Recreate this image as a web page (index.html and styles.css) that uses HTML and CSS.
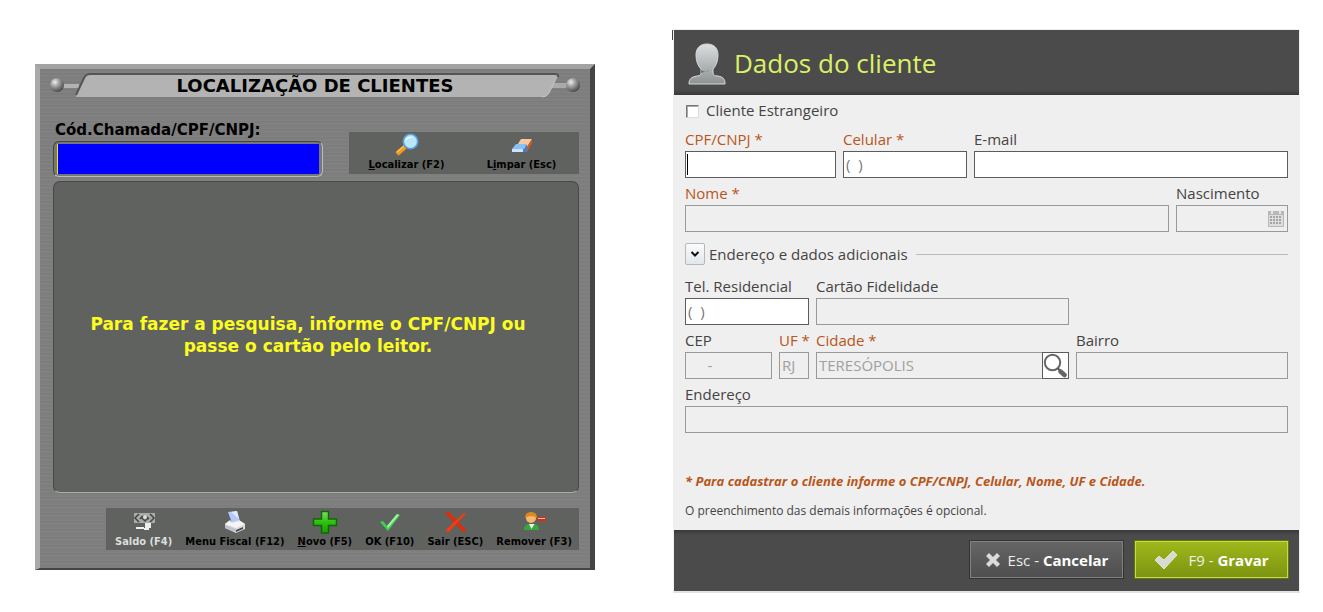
FILE: index.html
```html
<!DOCTYPE html>
<html lang="pt-BR">
<head>
<meta charset="utf-8">
<title>Dados do cliente</title>
<link rel="stylesheet" href="styles.css">
</head>
<body>
<main class="screens">
  <section class="search">
    <header class="titlebar">
      <svg class="cap" width="46" height="26" viewBox="0 0 46 26" aria-hidden="true">
        <defs><radialGradient id="knob" cx=".35" cy=".3" r=".75"><stop offset="0" stop-color="#eee"/><stop offset=".35" stop-color="#aaa"/><stop offset="1" stop-color="#444"/></radialGradient></defs>
        <path d="M12 11h18v4H12z" fill="#b3b3b3"/>
        <path d="M46 1H41Q37 1 35 5L27 22Q26 24 29 24H46z" fill="#b3b3b3"/>
        <path d="M46 1H41Q37 1 35 5L27 22" fill="none" stroke="#555" stroke-width="2"/>
        <circle cx="8" cy="12" r="7" fill="url(#knob)"/>
      </svg>
      <h1 class="search-title">LOCALIZAÇÃO DE CLIENTES</h1>
      <svg class="cap" width="46" height="26" viewBox="0 0 46 26" aria-hidden="true">
        <path d="M16 10h18v5H16z" fill="#aaa"/>
        <path d="M0 1H23L14 20Q12 24 7 24H0z" fill="#b3b3b3"/>
        <path d="M0 1H20Q24 1 23 4" fill="none" stroke="#555" stroke-width="2"/>
        <path d="M22 4L14 20Q12 24 7 24" fill="none" stroke="#c6c6c6"/>
        <circle cx="38" cy="12" r="7" fill="url(#knob)"/>
      </svg>
    </header>
    <div class="query">
      <div class="query-field">
        <label class="query-label" for="codigo">Cód.Chamada/CPF/CNPJ:</label>
        <div class="query-frame"><input class="query-input" id="codigo" type="text"></div>
      </div>
      <div class="query-actions">
        <button class="tool" type="button">
          <svg width="26" height="24" viewBox="0 0 26 24" aria-hidden="true"><path d="M3 21l8-7" stroke="#f09a1e" stroke-width="4.5"/><path d="M3 19l7-6" stroke="#ffc55c" stroke-width="1.5"/><circle cx="16.500" cy="8.500" r="7.200" fill="#b9e6fb" stroke="#5b9fd8" stroke-width="1.600"/><path d="M11 8q2-5 8-4-5 1-8 4z" fill="#fff"/></svg>
          <span><u>L</u>ocalizar (F2)</span>
        </button>
        <button class="tool" type="button">
          <svg width="26" height="24" viewBox="0 0 26 24" aria-hidden="true"><path d="M12 6h11l-5 8H7z" fill="#f6c9a4"/><path d="M23 6v4l-5 9v-5z" fill="#d9571c"/><path d="M7 12h11v7H3v-3z" fill="#3f7fce"/><path d="M7 11h11l-3 5H3z" fill="#8bc0f5"/><path d="M3 16h11v3H3z" fill="#c9e4fb"/></svg>
          <span>L<u>i</u>mpar (Esc)</span>
        </button>
      </div>
    </div>
    <div class="result">
      <p class="result-text">Para fazer a pesquisa, informe o CPF/CNPJ ou<br>passe o cartão pelo leitor.</p>
    </div>
    <div class="toolbar">
      <button class="tool tool-off" type="button" disabled>
        <svg width="26" height="24" viewBox="0 0 26 24" aria-hidden="true"><path d="M3 3h21v10H3z" fill="#aaa"/><path d="M8 4l-4 4 4 4M19 4l4 4-4 4" fill="none" stroke="#444" stroke-width="1.500"/><path d="M9 9q4-6 9 0M11 8l3 3 3-3" fill="none" stroke="#444" stroke-width="1.500"/><circle cx="14" cy="7" r="2" fill="#ddd"/><path d="M14 13h6v5h-6zM5 17h8v2H5zM13 18h5v2h-5z" fill="#eee"/></svg>
        <span>Saldo (F4)</span>
      </button>
      <button class="tool" type="button">
        <svg width="26" height="24" viewBox="0 0 26 24" aria-hidden="true"><path d="M6 2l9-1 3 10-8 2z" fill="#b5c8fb"/><path d="M9 2l6-1 2 8z" fill="#e2eaff"/><path d="M3 14l5-4 2 2 7-2 6 4v5l-9 4-11-5z" fill="#d9dbe0"/><path d="M3 14l11 4 9-4-5-3-8 2-3-2z" fill="#f5f5f7"/><path d="M14 20l7-3v2l-7 3z" fill="#4a4a4a"/><path d="M3 15l11 4v3L3 18z" fill="#bfc2c8"/></svg>
        <span>Menu Fiscal (F12)</span>
      </button>
      <button class="tool" type="button">
        <svg width="26" height="24" viewBox="0 0 26 24" aria-hidden="true"><defs><linearGradient id="plus" x2="0" y2="1"><stop offset="0" stop-color="#7ae05e"/><stop offset=".5" stop-color="#2fc010"/><stop offset="1" stop-color="#16a000"/></linearGradient></defs><path d="M9.500 1.500h7v7.500h8v6.500h-8v7.500h-7v-7.500h-8V9h8z" fill="url(#plus)" stroke="#12660a" stroke-width="1.500"/></svg>
        <span><u>N</u>ovo (F5)</span>
      </button>
      <button class="tool" type="button">
        <svg width="26" height="24" viewBox="0 0 26 24" aria-hidden="true"><path d="M3 12l3-1 4 5L20 4l3 1-12 16z" fill="#3fd24e"/><path d="M10 16L20 4l2 1-11 13z" fill="#a0f2a4"/></svg>
        <span>OK (F10)</span>
      </button>
      <button class="tool" type="button">
        <svg width="26" height="24" viewBox="0 0 26 24" aria-hidden="true"><path d="M3 3l4-1 17 18-1 2h-2z" fill="#e02c08"/><path d="M22 3l2 1-9 9-8 9-4-1 9-9z" fill="#f23c12"/></svg>
        <span>Sair (ESC)</span>
      </button>
      <button class="tool" type="button">
        <svg width="26" height="24" viewBox="0 0 26 24" aria-hidden="true"><path d="M3 20q0-6 5-6h5q5 0 5 6z" fill="#3aa73c"/><path d="M8 14l2.500 5 3-5z" fill="#e6f5e6"/><circle cx="10" cy="8" r="5" fill="#f5b871"/><path d="M4 8q0-6 6-6t6 6q-6-4-12 0z" fill="#dc8a1d"/><path d="M16 7h9v4h-9z" fill="#d33012"/><path d="M17 8h7v1h-7z" fill="#ffb9a5"/></svg>
        <span>Remover (F3)</span>
      </button>
    </div>
  </section>

  <form class="client">
    <header class="client-head">
      <svg width="38" height="42" viewBox="0 0 38 42" aria-hidden="true"><defs><linearGradient id="bust" x2="0" y2="1"><stop offset="0" stop-color="#dcdee0"/><stop offset="1" stop-color="#8d9293"/></linearGradient></defs><path d="M19 1c7 0 11 4 11 11 0 6-2 11-5 14v4q0 3 5 3 7 1 7 7v1H1v-1q0-6 8-7 4 0 4-2v-5c-3-3-5-8-5-14C8 5 12 1 19 1z" fill="url(#bust)" stroke="#d5d8d9"/><path d="M13 27q5 3 9 0l-9 3z" fill="#6d7172"/></svg>
      <h2 class="client-title">Dados do cliente</h2>
    </header>
    <div class="client-body">
      <label class="check"><input class="check-box" type="checkbox"><span>Cliente Estrangeiro</span></label>
      <div class="row row-contact">
        <div class="field"><label class="label required" for="cpf">CPF/CNPJ *</label><input class="input caret" id="cpf" type="text"></div>
        <div class="field"><label class="label required" for="cel">Celular *</label><input class="input" id="cel" type="text" value="(  )"></div>
        <div class="field"><label class="label" for="email">E-mail</label><input class="input" id="email" type="text"></div>
      </div>
      <div class="row row-name">
        <div class="field"><label class="label required" for="nome">Nome *</label><input class="input" id="nome" type="text" disabled></div>
        <div class="field"><label class="label" for="nasc">Nascimento</label>
          <div class="date"><input class="date-input" id="nasc" type="text" disabled>
          <svg width="16" height="17" viewBox="0 0 16 17" aria-hidden="true"><path d="M0 1h16v16H0z" fill="#b8b8b8"/><path d="M3 0h2v4H3zM11 0h2v4h-2z" fill="#e6e6e6"/><path d="M1 5h14v11H1z" fill="#dedede"/><path d="M2 7h12M2 10h12M2 13h12" stroke="#a5a5a5" stroke-width="2" stroke-dasharray="2 1"/></svg></div>
        </div>
      </div>
      <div class="section"><button class="toggle" type="button" aria-label="Recolher"><svg width="10" height="8" viewBox="0 0 10 8" aria-hidden="true"><path d="M1.500 2L5 5.500 8.500 2" fill="none" stroke="#111" stroke-width="2"/></svg></button><span>Endereço e dados adicionais</span><span class="rule"></span></div>
      <div class="row row-phone">
        <div class="field"><label class="label" for="tel">Tel. Residencial</label><input class="input" id="tel" type="text" value="(  )"></div>
        <div class="field"><label class="label" for="cartao">Cartão Fidelidade</label><input class="input" id="cartao" type="text" disabled></div>
      </div>
      <div class="row row-city">
        <div class="field"><label class="label" for="cep">CEP</label><input class="input" id="cep" type="text" value="     -" disabled></div>
        <div class="field"><label class="label required" for="uf">UF *</label><input class="input" id="uf" type="text" value="RJ" disabled></div>
        <div class="field"><label class="label required" for="cidade">Cidade *</label>
          <div class="lookup"><input class="input" id="cidade" type="text" value="TERESÓPOLIS" disabled><button class="lookup-button" type="button" aria-label="Buscar cidade"><svg width="25" height="25" viewBox="0 0 25 25" aria-hidden="true"><circle cx="9.500" cy="9.500" r="7.700" fill="none" stroke="#666" stroke-width="2"/><path d="M14.500 15l4 4" stroke="#555" stroke-width="2"/><path d="M17.500 18.500l4 3.500" stroke="#666" stroke-width="4.500" stroke-linecap="round"/></svg></button></div>
        </div>
        <div class="field"><label class="label" for="bairro">Bairro</label><input class="input" id="bairro" type="text" disabled></div>
      </div>
      <div class="field"><label class="label" for="end">Endereço</label><input class="input" id="end" type="text" disabled></div>
      <div class="notes">
        <p class="note note-required">* Para cadastrar o cliente informe o CPF/CNPJ, Celular, Nome, UF e Cidade.</p>
        <p class="note">O preenchimento das demais informações é opcional.</p>
      </div>
    </div>
    <footer class="client-foot">
      <button class="action" type="button"><svg width="16" height="16" viewBox="0 0 16 16" aria-hidden="true"><path d="M4 1l4 4 4-4 3 3-4 4 4 4-3 3-4-4-4 4-3-3 4-4-4-4z" fill="#d9dcde"/></svg><span>Esc - <b>Cancelar</b></span></button>
      <button class="action action-save" type="submit"><svg width="24" height="20" viewBox="0 0 24 20" aria-hidden="true"><path d="M1 10l4-4 5 4 9-9 4 4L10 19z" fill="#d6dbd2" stroke="#eef1e4" stroke-width=".8"/></svg><span>F9 - <b>Gravar</b></span></button>
    </footer>
  </form>
</main>
</body>
</html>
```
FILE: styles.css
```css
* { box-sizing: border-box; }
body { margin: 0; background: #fff; }
h1, h2, p { margin: 0; }
button, input { font: inherit; }
svg { flex: none; display: block; }

.screens {
  display: grid;
  grid-template-columns: 560fr 627fr;
  gap: 78px;
  align-items: start;
  padding: 29px 23px 18px 35px;
}

/* Customer search window */
.search {
  margin-top: 35px;
  padding: 4px 11px 18px 13px;
  border: solid;
  border-width: 5px 5px 2px 5px;
  border-color: #a3a3a3 #444 #444 #aaa;
  background: repeating-linear-gradient(#7b7b7b 0 1px, #7f7f7f 1px 3px, #828282 3px 4px);
  font-family: "DejaVu Sans Condensed", "DejaVu Sans", sans-serif;
  font-weight: bold;
  color: #000;
}
.titlebar { display: flex; margin: 0 -2px 0 -4px; }
.search-title {
  flex: 1;
  height: 24px;
  border-top: 2px solid #555;
  background: #b3b3b3;
  font: bold 18px/22px "DejaVu Sans", sans-serif;
  text-align: center;
  white-space: nowrap;
}
.query { display: flex; justify-content: space-between; align-items: flex-end; margin-top: 20px; }
.query-label { display: block; margin-left: 2px; font: bold 15px/22px "DejaVu Sans", sans-serif; }
.query-frame {
  width: 270px;
  padding: 2px 3px;
  border: 1px solid;
  border-color: #444 #bbb #bbb #444;
  border-radius: 6px;
  background: #777;
}
.query-input {
  display: block;
  width: 100%;
  height: 30px;
  border: 0;
  border-left: 1px solid #e8e800;
  background: #00f;
  color: #ff0;
}
.query-actions {
  display: grid;
  grid-template-columns: 1fr 1fr;
  width: 230px;
  height: 42px;
  margin-bottom: 3px;
  background: #60625f;
}
.tool {
  display: flex;
  flex-direction: column;
  align-items: center;
  gap: 1px;
  padding: 1px 0 0;
  border: 0;
  background: none;
  color: #000;
  font-size: 11px;
  line-height: 14px;
  white-space: nowrap;
}
.tool-off { color: #ddd; }
.result {
  display: grid;
  place-items: center;
  height: 312px;
  margin-top: 4px;
  border: 1px solid;
  border-color: #484848 #484848 #aaa #484848;
  border-radius: 7px;
  background: #60625f;
}
.result-text {
  padding: 0 16px 4px 0;
  color: #fcfc20;
  font: bold 17px/22px "DejaVu Sans", sans-serif;
  text-align: center;
}
.toolbar {
  display: flex;
  justify-content: space-between;
  height: 42px;
  margin: 15px 0 0 53px;
  padding: 1px 7px 0 9px;
  background: #60625f;
}

/* Customer data form */
.client {
  position: relative;
  border: 1px solid #efefef;
  border-bottom: 2px solid #e2e2e2;
  background: #efefef;
  color: #444;
  font-family: "Open Sans", "Noto Sans", sans-serif;
  font-size: 15px;
}
.client::before {
  content: "";
  position: absolute;
  left: -2px;
  top: 0;
  width: 1px;
  height: 10px;
  background: #444;
}
.client-head {
  display: flex;
  align-items: center;
  gap: 8px;
  height: 65px;
  padding: 3px 14px 0;
  background: linear-gradient(#4b4b4b 0 60px, #383838);
}
.client-title { padding-bottom: 2px; color: #ddf065; font-size: 26px; font-weight: normal; line-height: 32px; }
.client-body { display: grid; gap: 5px; padding: 3px 11px 4px; }
.check { display: flex; align-items: center; gap: 7px; height: 26px; padding: 0 1px; line-height: 24px; }
.check span { padding-bottom: 2px; }
.check-box {
  appearance: none;
  width: 13px;
  height: 13px;
  margin: 0;
  border: 1px solid;
  border-color: #777 #ddd #ddd #777;
  background: #fff;
  box-shadow: inset 1px 1px #aaa;
}
.row { display: grid; gap: 7px; }
.row-contact { grid-template-columns: 151fr 124fr 314fr; }
.row-name { grid-template-columns: 484fr 112fr; }
.row-phone { grid-template-columns: 124fr 253fr 212fr; }
.row-city { grid-template-columns: 87fr 30fr 253fr 212fr; }
.field { min-width: 0; }
.label { display: block; padding-bottom: 2px; line-height: 20px; white-space: nowrap; }
.required { color: #b8561a; }
.input, .date {
  display: block;
  width: 100%;
  height: 27px;
  padding: 0 2px 2px;
  border: 1px solid #5c5c5e;
  border-radius: 0;
  background: #fff;
  color: #777;
  white-space: pre;
}
.input:disabled, .date { border-color: #9a9a9a; background: #efefef; color: #a0a0a0; }
.caret { background: linear-gradient(#000, #000) 1px 2px / 1px 21px no-repeat #fff; }
.date { display: flex; align-items: center; padding: 0 3px 0 2px; }
.date-input { flex: 1; min-width: 0; border: 0; background: none; }
.section { display: flex; align-items: center; gap: 4px; height: 34px; }
.toggle {
  display: grid;
  place-items: center;
  width: 20px;
  height: 22px;
  padding: 0;
  border: 1px solid #b5b9be;
  border-radius: 2px;
  background: linear-gradient(#fafcfd, #e2e7ec);
}
.rule { flex: 1; height: 1px; margin-left: 4px; background: #bbb; }
.lookup { display: flex; }
.lookup-button {
  flex: none;
  width: 27px;
  height: 27px;
  margin-left: -1px;
  padding: 0;
  border: 1px solid #5c5c5e;
  background: #fff;
}
.notes { padding-top: 28px; }
.note { font-size: 12px; line-height: 30px; }
.note-required { color: #b8561a; font-size: 13px; font-weight: bold; font-style: italic; }
.client-foot {
  display: flex;
  justify-content: flex-end;
  gap: 10px;
  height: 61px;
  padding: 10px 10px 12px;
  background: linear-gradient(#3a3a3a, #4b4b4b 5px);
}
.action {
  display: flex;
  align-items: center;
  justify-content: center;
  gap: 7px;
  width: 155px;
  padding: 0;
  border: 1px solid #333;
  background: linear-gradient(#666, #4e4e4e);
  box-shadow: inset 0 0 0 1px #828282;
  color: #eee;
  font-size: 15px;
}
.action b { color: #fff; }
.action-save {
  gap: 10px;
  border-color: #5f7800;
  background: linear-gradient(#9fb81b, #7c9410);
  box-shadow: inset 0 0 0 1px #c5da52;
}
```
